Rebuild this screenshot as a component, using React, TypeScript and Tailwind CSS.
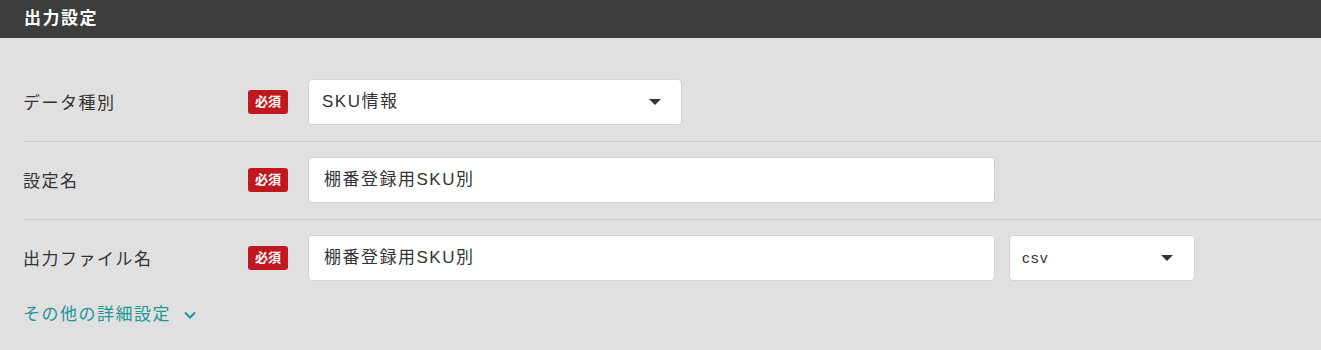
const font = { fontFamily: '"Liberation Sans", "Noto Sans CJK JP", sans-serif' };

function Required() {
  return (
    <span className="inline-flex h-[24px] w-[40px] shrink-0 items-center justify-center rounded-[3px] bg-[#c1181f] text-[13px] font-bold text-white">
      必須
    </span>
  );
}

function Caret() {
  return <span className="h-0 w-0 border-x-[6px] border-t-[6px] border-x-transparent border-t-[#333]" />;
}

type RowProps = {
  label: string;
  children: React.ReactNode;
  last?: boolean;
};

function Row({ label, children, last }: RowProps) {
  return (
    <div className={`flex items-center pt-[15px] pb-4 ${last ? "" : "border-b border-[#cdcdcd]"}`}>
      <div className="w-[225px] shrink-0 pt-[4px] text-[17px] tracking-[1.5px] text-[#333]">{label}</div>
      <Required />
      <div className="ml-5 flex items-center gap-[14px]">{children}</div>
    </div>
  );
}

export default function App() {
  return (
    <div className="h-[350px] w-full bg-[#e0e0e0]" style={font}>
      <div className="flex h-[38px] items-center bg-[#3d3d3d] px-6 text-[17px] font-bold tracking-[1.5px] text-white">
        出力設定
      </div>
      <div className="pl-[23px] pt-[26px]">
        <Row label="データ種別">
          <div className="flex h-[46px] w-[374px] items-center justify-between rounded-[4px] border border-[#d2d2d2] bg-white pl-[13px] pr-5 text-[17px] tracking-[1.5px] text-[#333]">
            <span>SKU情報</span>
            <Caret />
          </div>
        </Row>
        <Row label="設定名">
          <div className="flex h-[46px] w-[687px] items-center rounded-[4px] border border-[#d2d2d2] bg-white px-[15px] text-[17px] tracking-[1.5px] text-[#333]">
            棚番登録用SKU別
          </div>
        </Row>
        <Row label="出力ファイル名" last>
          <div className="flex h-[46px] w-[687px] items-center rounded-[4px] border border-[#d2d2d2] bg-white px-[15px] text-[17px] tracking-[1.5px] text-[#333]">
            棚番登録用SKU別
          </div>
          <div className="flex h-[46px] w-[186px] items-center justify-between rounded-[4px] border border-[#d2d2d2] bg-white pl-[12px] pr-[21px] text-[15px] tracking-[1.5px] text-[#333]">
            <span>csv</span>
            <Caret />
          </div>
        </Row>
        <div className="mt-[5px] flex items-center gap-3 text-[17px] tracking-[1.5px] text-[#1d9696]">
          <span>その他の詳細設定</span>
          <svg width="14" height="10" viewBox="0 0 14 10" fill="none" stroke="currentColor" strokeWidth="2">
            <path d="M2 2.5 7 7.5 12 2.5" />
          </svg>
        </div>
      </div>
    </div>
  );
}
